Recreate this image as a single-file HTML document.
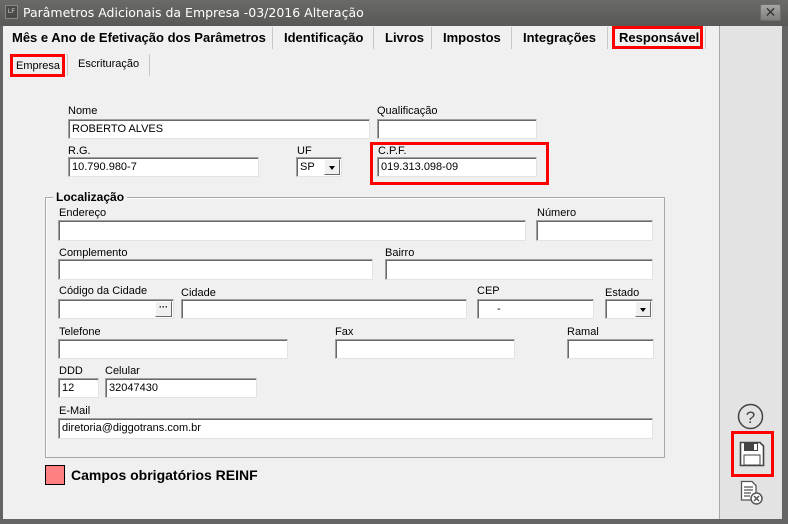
<!DOCTYPE html>
<html><head><meta charset="utf-8"><style>
*{box-sizing:border-box;margin:0;padding:0}
body{width:788px;height:524px;overflow:hidden;background:#f0f0f0;font-family:"Liberation Sans","DejaVu Sans",sans-serif;font-size:11px;color:#000;position:relative}
.a{position:absolute}
.lbl{position:absolute;font-size:11px;line-height:13px;white-space:nowrap;top:0}
.in{position:absolute;background:#fff;border:1px solid;border-color:#a0a0a0 #e3e3e3 #e3e3e3 #a0a0a0;box-shadow:inset 1px 1px 0 #696969;font-size:11px;line-height:13px;padding:3px 0 0 3px;white-space:nowrap}
.tab{position:absolute;top:30px;font-weight:bold;font-size:13px;line-height:16px;white-space:nowrap}
.sep{position:absolute;width:1px;background:#c8c8c8}
.red{position:absolute;border:3px solid #f00}
.dd{position:absolute;right:1px;top:1px;bottom:1px;width:16px;background:#f0f0f0;border:1px solid;border-color:#fff #696969 #696969 #fff}
.dd:after{content:"";position:absolute;left:4px;top:6px;border:3.5px solid transparent;border-top:4px solid #000}
</style></head><body>
<div class="a" style="left:0;top:0;width:788px;height:26px;background:linear-gradient(#6a6a66,#585855)"></div>
<div class="a" style="left:5px;top:5px;width:13px;height:14px;background:#4a4a48;border:1px solid #888;color:#ddd;font-size:6px;line-height:12px;text-align:center">LF</div>
<div class="a" style="left:23px;top:5px;color:#fff;line-height:16px;font-family:'DejaVu Sans',sans-serif;font-size:12.5px">Parâmetros Adicionais da Empresa -03/2016 Alteração</div>
<div class="a" style="left:760px;top:4px;width:21px;height:17px;background:linear-gradient(#a5a5a2,#7f7f7c);border:1px solid #6e6e6b;border-radius:2px;color:#333;font-weight:bold;font-size:14px;line-height:15px;text-align:center">✕</div>
<div class="a" style="left:0;top:26px;width:3px;height:498px;background:#646464"></div>
<div class="a" style="left:782px;top:26px;width:6px;height:498px;background:#646464"></div>
<div class="a" style="left:0;top:519px;width:788px;height:5px;background:#646464"></div>
<div class="a" style="left:719px;top:26px;width:1px;height:493px;background:#a8a8a8"></div>
<div class="a" style="left:720px;top:26px;width:62px;height:493px;background:#e3e3e3"></div>
<div class="tab" style="left:12px">Mês e Ano de Efetivação dos Parâmetros</div>
<div class="sep" style="left:272px;top:27px;height:22px"></div>
<div class="tab" style="left:284px">Identificação</div>
<div class="sep" style="left:373px;top:27px;height:22px"></div>
<div class="tab" style="left:385px">Livros</div>
<div class="sep" style="left:431px;top:27px;height:22px"></div>
<div class="tab" style="left:443px">Impostos</div>
<div class="sep" style="left:511px;top:27px;height:22px"></div>
<div class="tab" style="left:523px">Integrações</div>
<div class="sep" style="left:607px;top:27px;height:22px"></div>
<div class="tab" style="left:619px">Responsável</div>
<div class="red" style="left:612px;top:26px;width:91px;height:23px"></div>
<div class="sep" style="left:705px;top:27px;height:22px"></div>
<div class="lbl" style="left:16px;top:60px">Empresa</div>
<div class="red" style="left:10px;top:54px;width:55px;height:23px"></div>
<div class="sep" style="left:67px;top:54px;height:22px"></div>
<div class="lbl" style="left:78px;top:58px">Escrituração</div>
<div class="sep" style="left:149px;top:54px;height:22px"></div>
<div class="lbl" style="left:68px;top:105px">Nome</div>
<div class="in" style="left:68px;top:119px;width:302px;height:20px">ROBERTO ALVES</div>
<div class="lbl" style="left:377px;top:105px">Qualificação</div>
<div class="in" style="left:377px;top:119px;width:160px;height:20px"></div>
<div class="lbl" style="left:68px;top:145px">R.G.</div>
<div class="in" style="left:68px;top:157px;width:191px;height:20px">10.790.980-7</div>
<div class="lbl" style="left:297px;top:145px">UF</div>
<div class="in" style="left:296px;top:157px;width:46px;height:20px">SP<div class="dd"></div></div>
<div class="lbl" style="left:378px;top:145px">C.P.F.</div>
<div class="in" style="left:377px;top:157px;width:160px;height:20px">019.313.098-09</div>
<div class="red" style="left:370px;top:142px;width:179px;height:43px"></div>
<div class="a" style="left:45px;top:197px;width:620px;height:261px;border:1px solid #a8a8a8;box-shadow:1px 1px 0 #fff inset"></div>
<div class="a" style="left:53px;top:190px;padding:0 3px;background:#f0f0f0;font-weight:bold;font-size:12px;line-height:14px">Localização</div>
<div class="lbl" style="left:59px;top:207px">Endereço</div>
<div class="in" style="left:58px;top:220px;width:468px;height:21px"></div>
<div class="lbl" style="left:537px;top:207px">Número</div>
<div class="in" style="left:536px;top:220px;width:117px;height:21px"></div>
<div class="lbl" style="left:59px;top:247px">Complemento</div>
<div class="in" style="left:58px;top:259px;width:315px;height:21px"></div>
<div class="lbl" style="left:385px;top:247px">Bairro</div>
<div class="in" style="left:385px;top:259px;width:268px;height:21px"></div>
<div class="lbl" style="left:59px;top:285px">Código da Cidade</div>
<div class="in" style="left:58px;top:299px;width:116px;height:20px"><div class="a" style="right:1px;top:1px;width:17px;height:16px;background:#f0f0f0;border:1px solid;border-color:#fff #696969 #696969 #fff;font-size:9px;line-height:10px;text-align:center;font-weight:bold">···</div></div>
<div class="lbl" style="left:181px;top:287px">Cidade</div>
<div class="in" style="left:181px;top:299px;width:286px;height:20px"></div>
<div class="lbl" style="left:477px;top:285px">CEP</div>
<div class="in" style="left:477px;top:299px;width:117px;height:20px;padding-left:19px">-</div>
<div class="lbl" style="left:605px;top:287px">Estado</div>
<div class="in" style="left:605px;top:299px;width:48px;height:20px"><div class="dd"></div></div>
<div class="lbl" style="left:59px;top:326px">Telefone</div>
<div class="in" style="left:58px;top:339px;width:230px;height:20px"></div>
<div class="lbl" style="left:335px;top:326px">Fax</div>
<div class="in" style="left:335px;top:339px;width:180px;height:20px"></div>
<div class="lbl" style="left:567px;top:326px">Ramal</div>
<div class="in" style="left:567px;top:339px;width:87px;height:20px"></div>
<div class="lbl" style="left:59px;top:365px">DDD</div>
<div class="in" style="left:58px;top:378px;width:41px;height:20px">12</div>
<div class="lbl" style="left:105px;top:365px">Celular</div>
<div class="in" style="left:105px;top:378px;width:152px;height:20px">32047430</div>
<div class="lbl" style="left:59px;top:405px">E-Mail</div>
<div class="in" style="left:58px;top:418px;width:595px;height:21px">diretoria@diggotrans.com.br</div>
<div class="a" style="left:45px;top:465px;width:20px;height:20px;background:#ff8080;border:1px solid #000"></div>
<div class="a" style="left:71px;top:467px;font-weight:bold;font-size:14px;line-height:16px">Campos obrigatórios REINF</div>
<svg class="a" style="left:737px;top:403px" width="27" height="27" viewBox="0 0 27 27"><circle cx="13.5" cy="13.5" r="12" fill="none" stroke="#444" stroke-width="1.5"/><text x="13.5" y="20" text-anchor="middle" font-family="Liberation Sans" font-size="17" fill="#444">?</text></svg>
<div class="red" style="left:731px;top:431px;width:43px;height:46px"></div>
<svg class="a" style="left:739px;top:441px" width="26" height="26" viewBox="0 0 26 26"><path d="M1.5 1.5H21l3.5 3.5V24.5H1.5Z" fill="#fff" stroke="#444" stroke-width="1.6"/><rect x="5" y="2" width="14" height="8" fill="#444"/><rect x="15" y="3" width="3" height="6" fill="#fff"/><rect x="5" y="14" width="16" height="10" fill="#fff" stroke="#444" stroke-width="1"/></svg>
<svg class="a" style="left:740px;top:480px" width="24" height="26" viewBox="0 0 24 26"><path d="M1.5 1.5H12l4 4V20H1.5Z" fill="#fff" stroke="#555" stroke-width="1.3"/><path d="M4 7h9M4 10h9M4 13h7M4 16h6" stroke="#555" stroke-width="1.2"/><circle cx="16.5" cy="18.5" r="5.5" fill="#fff" stroke="#555" stroke-width="1.5"/><path d="M14 16l5 5M19 16l-5 5" stroke="#555" stroke-width="1.5"/></svg>
</body></html>
